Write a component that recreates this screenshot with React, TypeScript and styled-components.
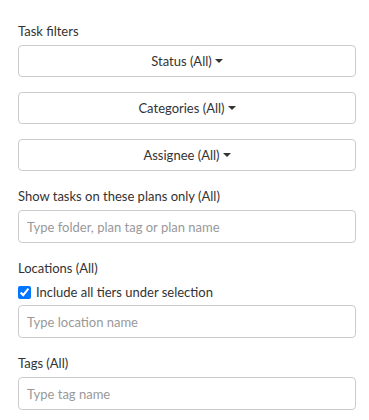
import styled, { createGlobalStyle } from 'styled-components';

const GlobalStyle = createGlobalStyle`
  body {
    margin: 0;
    background: #fff;
    font-family: Lato, "Open Sans", sans-serif;
    font-size: 13px;
    line-height: 20px;
    color: #333;
  }
  * {
    box-sizing: border-box;
  }
`;

const Panel = styled.div`
  width: 338px;
  margin-left: 18px;
  padding-top: 21px;
  display: flex;
  flex-direction: column;
`;

const Section = styled.div`
  display: flex;
  flex-direction: column;
  margin-bottom: 15px;
`;

const SectionLabel = styled.label`
  display: block;
  font-weight: normal;
  margin-bottom: 4px;
`;

const FilterButton = styled.button`
  height: 32px;
  width: 100%;
  border: 1px solid #ccc;
  border-radius: 4px;
  background: #fff;
  color: #333;
  font-family: inherit;
  font-size: 13px;
  display: flex;
  align-items: center;
  justify-content: center;
  padding: 0 12px;
  margin-bottom: 15px;
  cursor: pointer;
  &:last-child {
    margin-bottom: 0;
  }
`;

const Caret = styled.span`
  display: inline-block;
  width: 0;
  height: 0;
  margin-left: 3px;
  border-top: 4px solid #333;
  border-left: 4px solid transparent;
  border-right: 4px solid transparent;
`;

const TextInput = styled.input`
  height: 33px;
  width: 100%;
  border: 1px solid #ccc;
  border-radius: 4px;
  padding: 0 8px;
  font-family: inherit;
  font-size: 13px;
  color: #333;
  outline: none;
  &::placeholder {
    color: #999;
  }
`;

const CheckRow = styled.label`
  display: flex;
  align-items: center;
  height: 20px;
  margin-bottom: 3px;
  input {
    width: 13px;
    height: 13px;
    margin: 0 5px 0 0;
  }
`;

const filters = ['Status (All)', 'Categories (All)', 'Assignee (All)'];

export default function App() {
  return (
    <>
      <GlobalStyle />
      <Panel>
        <Section>
          <SectionLabel>Task filters</SectionLabel>
          {filters.map((f) => (
            <FilterButton key={f}>
              {f}
              <Caret />
            </FilterButton>
          ))}
        </Section>
        <Section>
          <SectionLabel>Show tasks on these plans only (All)</SectionLabel>
          <TextInput placeholder="Type folder, plan tag or plan name" />
        </Section>
        <Section>
          <SectionLabel>Locations (All)</SectionLabel>
          <CheckRow>
            <input type="checkbox" defaultChecked />
            Include all tiers under selection
          </CheckRow>
          <TextInput placeholder="Type location name" />
        </Section>
        <Section>
          <SectionLabel>Tags (All)</SectionLabel>
          <TextInput placeholder="Type tag name" />
        </Section>
      </Panel>
    </>
  );
}
